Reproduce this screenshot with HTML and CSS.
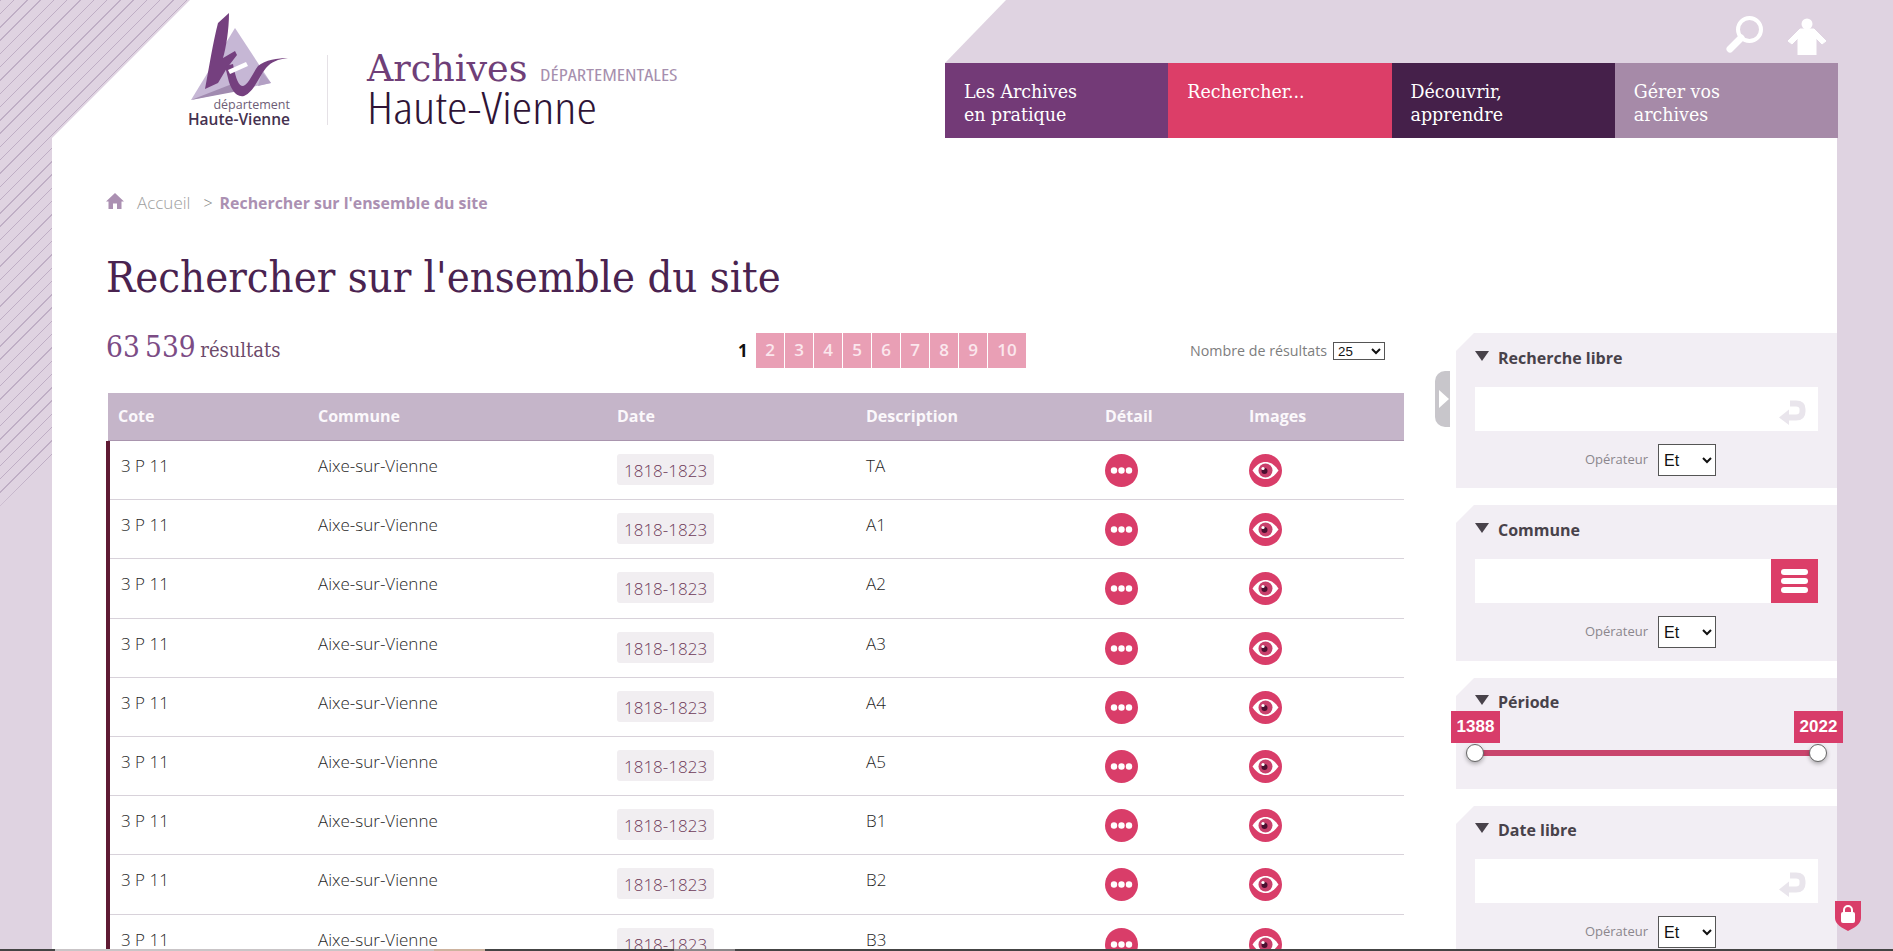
FILE: index.html
```html
<!DOCTYPE html>
<html lang="fr">
<head>
<meta charset="utf-8">
<title>Rechercher sur l'ensemble du site</title>
<link rel="stylesheet" href="styles.css">
</head>
<body>
<svg class="defs" width="0" height="0" aria-hidden="true">
  <symbol id="dots" viewBox="0 0 33 33"><circle cx="16.5" cy="16.5" r="16.5" fill="#d93d69"/><circle cx="9" cy="16.5" r="3.2" fill="#fff"/><circle cx="16.5" cy="16.5" r="3.2" fill="#fff"/><circle cx="24" cy="16.5" r="3.2" fill="#fff"/></symbol>
  <symbol id="eye" viewBox="0 0 33 33"><circle cx="16.5" cy="16.5" r="16.5" fill="#d93d69"/><path d="M3.500 16.5C8 10 12 8 16.5 8S25 10 29.500 16.5C25 23 21 25 16.5 25S8 23 3.500 16.5Z" fill="#fff"/><circle cx="16.5" cy="16.5" r="7" fill="#c9406c"/><circle cx="15.5" cy="17" r="3" fill="#4a1030"/><circle cx="14" cy="14.5" r="1.6" fill="#fff"/></symbol>
  <symbol id="enter" viewBox="0 0 27 25"><path d="M8 17.5H17Q23.500 17.500 23.500 11.500V9Q23.500 3.500 17 3.500H11" fill="none" stroke="#e9e5ec" stroke-width="6"/><path d="M0 17.5L10 9.5V25Z" fill="#e9e5ec"/></symbol>
</svg>
<div class="stripes"></div>
<div class="viewport">
  <div class="sheet">
    <header class="head">
      <a class="logo">
        <svg class="logo-mark" viewBox="16 10 104 90" width="104" height="90" aria-hidden="true">
          <path d="M65 28L21 100L101 83Z" fill="#c6b7d5"/>
          <path d="M21 100L62 84L74 90Z" fill="#a18bb0"/>
          <path d="M88 86L101 83L92 72Z" fill="#b3a0c4"/>
          <path d="M59 13C59 30 56 48 53 58L65 51L67 55L57 68L48 83L35 89C39 68 43 42 48 23Z" fill="#75407f"/>
          <path d="M55 66L63 64C65 74 67 84 72 86C78 86 82 74 88 66C95 60 108 58 118 58C108 59 101 62 96 68C88 78 84 92 74 96C66 98 60 88 58 78Z" fill="#75407f"/>
          <path d="M58 70L76 62L78 66L60 74Z" fill="#fff"/>
        </svg>
        <span class="logo-small">département</span>
        <span class="logo-big">Haute-Vienne</span>
      </a>
      <div class="brand">
        <div class="brand-top"><span class="brand-archives">Archives</span><span class="brand-dep">DÉPARTEMENTALES</span></div>
        <div class="brand-hv">Haute-Vienne</div>
      </div>
      <div class="head-right">
        <div class="tools">
          <svg class="tool-search" viewBox="0 0 38 38" width="38" height="38" aria-hidden="true"><circle cx="23.500" cy="14.500" r="11.500" fill="none" stroke="#fff" stroke-width="4"/><path d="M15 23L4 34" stroke="#fff" stroke-width="7" stroke-linecap="round"/></svg>
          <svg class="tool-user" viewBox="0 0 40 37" width="40" height="37" aria-hidden="true"><circle cx="20" cy="6" r="5.500" fill="#fff"/><path d="M11 37V20L5 26L1 23L13 11H27L39 23L35 26L29 20V37Z" fill="#fff" stroke="#fff" stroke-linejoin="round"/></svg>
        </div>
        <nav class="nav">
          <a class="nav-item nav-a">Les Archives<br>en pratique</a>
          <a class="nav-item nav-b">Rechercher...</a>
          <a class="nav-item nav-c">Découvrir,<br>apprendre</a>
          <a class="nav-item nav-d">Gérer vos<br>archives</a>
        </nav>
      </div>
    </header>

    <div class="crumbs">
      <svg class="home" viewBox="0 0 18 16" width="18" height="16" aria-hidden="true"><path d="M9 0L18 8.500H15.500V16H11V10.500H7V16H2.500V8.500H0Z" fill="#ab90b2"/></svg>
      <span class="crumb-link">Accueil</span>
      <span class="crumb-sep">&gt;</span>
      <strong class="crumb-now">Rechercher sur l'ensemble du site</strong>
    </div>

    <h1 class="title">Rechercher sur l'ensemble du site</h1>

    <div class="columns">
      <section class="results">
        <div class="bar">
          <div class="count"><span class="count-n">63&#8239;539</span> <span class="count-l">résultats</span></div>
          <div class="pager">
            <span class="page-cur">1</span>
            <a class="page">2</a><a class="page">3</a><a class="page">4</a><a class="page">5</a><a class="page">6</a><a class="page">7</a><a class="page">8</a><a class="page">9</a><a class="page page-wide">10</a>
          </div>
          <div class="perpage"><span>Nombre de résultats</span><select class="sel-small"><option>25</option></select></div>
        </div>

        <div class="thead">
          <div>Cote</div><div>Commune</div><div>Date</div><div>Description</div><div>Détail</div><div>Images</div>
        </div>
        <div class="tbody">
          <div class="row"><div>3 P 11</div><div>Aixe-sur-Vienne</div><div><span class="chip">1818-1823</span></div><div>TA</div><div><svg class="ico"><use href="#dots"/></svg></div><div><svg class="ico"><use href="#eye"/></svg></div></div>
          <div class="row"><div>3 P 11</div><div>Aixe-sur-Vienne</div><div><span class="chip">1818-1823</span></div><div>A1</div><div><svg class="ico"><use href="#dots"/></svg></div><div><svg class="ico"><use href="#eye"/></svg></div></div>
          <div class="row"><div>3 P 11</div><div>Aixe-sur-Vienne</div><div><span class="chip">1818-1823</span></div><div>A2</div><div><svg class="ico"><use href="#dots"/></svg></div><div><svg class="ico"><use href="#eye"/></svg></div></div>
          <div class="row"><div>3 P 11</div><div>Aixe-sur-Vienne</div><div><span class="chip">1818-1823</span></div><div>A3</div><div><svg class="ico"><use href="#dots"/></svg></div><div><svg class="ico"><use href="#eye"/></svg></div></div>
          <div class="row"><div>3 P 11</div><div>Aixe-sur-Vienne</div><div><span class="chip">1818-1823</span></div><div>A4</div><div><svg class="ico"><use href="#dots"/></svg></div><div><svg class="ico"><use href="#eye"/></svg></div></div>
          <div class="row"><div>3 P 11</div><div>Aixe-sur-Vienne</div><div><span class="chip">1818-1823</span></div><div>A5</div><div><svg class="ico"><use href="#dots"/></svg></div><div><svg class="ico"><use href="#eye"/></svg></div></div>
          <div class="row"><div>3 P 11</div><div>Aixe-sur-Vienne</div><div><span class="chip">1818-1823</span></div><div>B1</div><div><svg class="ico"><use href="#dots"/></svg></div><div><svg class="ico"><use href="#eye"/></svg></div></div>
          <div class="row"><div>3 P 11</div><div>Aixe-sur-Vienne</div><div><span class="chip">1818-1823</span></div><div>B2</div><div><svg class="ico"><use href="#dots"/></svg></div><div><svg class="ico"><use href="#eye"/></svg></div></div>
          <div class="row"><div>3 P 11</div><div>Aixe-sur-Vienne</div><div><span class="chip">1818-1823</span></div><div>B3</div><div><svg class="ico"><use href="#dots"/></svg></div><div><svg class="ico"><use href="#eye"/></svg></div></div>
        </div>
      </section>

      <aside class="side">
        <div class="toggle"><span class="toggle-arrow"></span></div>

        <div class="panel panel-std">
          <div class="panel-title"><span class="tri"></span>Recherche libre</div>
          <div class="field"><svg class="enter"><use href="#enter"/></svg></div>
          <div class="oper"><span>Opérateur</span><select class="sel"><option>Et</option></select></div>
        </div>

        <div class="panel panel-list">
          <div class="panel-title"><span class="tri"></span>Commune</div>
          <div class="field field-list">
            <span class="burger"><i></i><i></i><i></i></span>
          </div>
          <div class="oper"><span>Opérateur</span><select class="sel"><option>Et</option></select></div>
        </div>

        <div class="panel panel-range">
          <div class="panel-title"><span class="tri"></span>Période</div>
          <div class="slider">
            <span class="tag tag-l">1388</span>
            <span class="tag tag-r">2022</span>
            <span class="thumb thumb-l"></span>
            <span class="thumb thumb-r"></span>
          </div>
        </div>

        <div class="panel panel-std panel-last">
          <div class="panel-title"><span class="tri"></span>Date libre</div>
          <div class="field"><svg class="enter"><use href="#enter"/></svg></div>
          <div class="oper"><span>Opérateur</span><select class="sel"><option>Et</option></select></div>
        </div>
      </aside>
    </div>
  </div>
</div>
<div class="lock">
  <svg viewBox="0 0 26 30" width="26" height="30" aria-hidden="true"><path d="M0 0H26V17C26 23 19 27 13 30C7 27 0 23 0 17Z" fill="#d93d69"/><rect x="6" y="11" width="14" height="11" rx="2" fill="#fff"/><path d="M9 12V9A4 4 0 0 1 17 9V12" fill="none" stroke="#fff" stroke-width="2"/></svg>
</div>
<div class="taskbar"><span class="tb-a"></span><span class="tb-b"></span><span class="tb-c"></span><span class="tb-d"></span><span class="tb-e"></span><span class="tb-f"></span></div>
</body>
</html>
```

FILE: styles.css
```css
* { box-sizing: border-box; }
html, body { margin: 0; height: 951px; overflow: hidden; }
body {
  display: flex;
  flex-direction: column;
  background: #dfd3e1;
  font-family: "Open Sans", sans-serif;
  color: #444;
  position: relative;
}
.defs { position: absolute; }

.stripes {
  position: absolute;
  left: 0;
  top: 0;
  width: 190px;
  height: 506px;
  background: repeating-linear-gradient(135deg, #bfaec5 0, #bfaec5 1px, #dfd3e1 1px, #dfd3e1 9.4px);
  clip-path: polygon(0 0, 190px 0, 52px 138px, 52px 455px, 0 506px);
}
.viewport {
  flex: 1;
  min-height: 0;
  overflow: hidden;
  padding: 0 56px 0 52px;
  position: relative;
}
.sheet {
  position: relative;
  isolation: isolate;
  height: 100%;
}
.sheet::before {
  content: "";
  position: absolute;
  inset: 0;
  z-index: -1;
  background: #fff;
  clip-path: polygon(138px 0, 100% 0, 100% 100%, 0 100%, 0 138px);
}

/* header */
.head { display: flex; height: 138px; }
.logo {
  width: 104px;
  margin-left: 134px;
  padding-top: 10px;
  display: flex;
  flex-direction: column;
  align-items: flex-end;
  color: #4a3a52;
}
.logo-mark { display: block; flex: none; }
.logo-small { font-size: 12.5px; line-height: 14px; margin-top: -2px; font-weight: 400; color: #6e5d76; }
.logo-big { font-size: 15.500px; line-height: 15px; font-weight: 600; white-space: nowrap; color: #45314f; }
.brand {
  margin: 55px 0 0 37px;
  padding-left: 39px;
  border-left: 1px solid #e5e1e6;
  height: 70px;
  width: 618px;
  flex: none;
}
.brand-top { display: flex; align-items: baseline; height: 32px; margin-top: -2px; }
.brand-archives {
  font-family: "DejaVu Serif", serif;
  font-size: 36.500px;
  line-height: 32px;
  color: #6f3f78;
}
.brand-dep {
  margin-left: 13px;
  font-size: 17px;
  font-stretch: 75%;
  color: #a68fae;
  transform: scaleX(1.21);
  transform-origin: left center;
}
.brand-hv {
  font-size: 44px;
  line-height: 44px;
  font-weight: 300;
  font-stretch: 75%;
  color: #2f1436;
  white-space: nowrap;
  transform: scaleX(1.18);
  transform-origin: left center;
}
.head-right { width: 893px; margin-left: auto; flex: none; }
.tools {
  height: 63px;
  background: #dfd3e1;
  clip-path: polygon(61px 0, 100% 0, 100% 100%, 0 100%);
  display: flex;
  justify-content: flex-end;
  align-items: flex-start;
  padding: 15px 11px 0 0;
  gap: 23px;
}
.tool-user { margin-top: 3px; }
.nav { display: grid; grid-template-columns: repeat(4, 1fr); height: 75px; }
.nav-item {
  padding: 17px 0 0 19px;
  font-family: "DejaVu Serif", serif;
  font-stretch: condensed;
  font-size: 19.400px;
  line-height: 23px;
  color: #fff;
}
.nav-a { background: #733a77; }
.nav-b { background: #dc3e68; }
.nav-c { background: #45204a; }
.nav-d { background: #a68aa8; }

/* breadcrumb + title */
.crumbs {
  display: flex;
  align-items: center;
  height: 22px;
  margin: 54px 0 0 54px;
  font-size: 16px;
  color: #ab90b2;
}
.home { margin-right: 13px; position: relative; top: -2px; }
.crumb-link { font-size: 17px; font-weight: 300; color: #9e9e9e; position: relative; top: -1px; }
.crumb-sep { margin: 0 7px 0 13px; font-weight: 300; color: #888; }
.crumb-now { font-size: 15.900px; font-weight: 700; }
.title {
  margin: 32px 0 0 54px;
  height: 62px;
  font-family: "DejaVu Serif", serif;
  font-stretch: condensed;
  font-size: 43.250px;
  line-height: 62px;
  font-weight: 400;
  color: #4a2350;
  white-space: nowrap;
}

/* columns */
.columns {
  display: grid;
  grid-template-columns: 1298px 381px;
  column-gap: 52px;
  margin: 25px 0 0 54px;
}
.results { min-width: 0; }
.bar {
  display: grid;
  grid-template-columns: 632px auto 1fr;
  grid-template-rows: 35px;
  align-items: center;
  height: 35px;
  margin-bottom: 25px;
}
.count { font-family: "DejaVu Serif", serif; font-stretch: condensed; white-space: nowrap; margin-top: -8px; }
.count-n { font-size: 29.500px; color: #7c4c85; }
.count-l { font-size: 20px; color: #6d4a6a; }
.pager { display: flex; align-items: center; }
.page-cur { font-size: 17px; font-weight: 700; color: #111; width: 18px; }
.page {
  width: 28px;
  height: 35px;
  margin-right: 1px;
  background: #e99fb5;
  color: #fbe7ed;
  font-size: 17px;
  font-weight: 600;
  line-height: 34px;
  text-align: center;
}
.page-wide { width: 38px; margin-right: 0; }
.perpage {
  display: flex;
  justify-content: flex-end;
  align-items: center;
  gap: 6px;
  padding-right: 19px;
  font-size: 14.250px;
  font-weight: 400;
  color: #7d7d7d;
}
.sel-small {
  width: 52px;
  height: 18px;
  padding: 0;
  border: 1px solid #555;
  border-radius: 0;
  background: #fff;
  font-family: "Liberation Sans", sans-serif;
  font-size: 13.300px;
  color: #111;
}

/* table */
.thead, .row { display: grid; }
.thead {
  grid-template-columns: 210px 299px 249px 239px 144px 155px;
  margin-left: 2px;
  height: 48px;
  background: #c5b5c9;
  border-bottom: 1px solid #a995ae;
  font-size: 16px;
  font-weight: 700;
  line-height: 47px;
  color: #fbf8fb;
}
.thead > div:first-child { padding-left: 10px; }
.tbody { border-left: 4px solid #5f1a33; }
.row {
  grid-template-columns: 208px 299px 249px 239px 144px 155px;
  height: 59.200px;
  border-bottom: 1px solid #d8d2da;
  padding-top: 14px;
  font-size: 17px;
  font-weight: 300;
  line-height: 22px;
  color: #1f1f1f;
}
.row > div:first-child { padding-left: 11px; }
.chip {
  display: inline-block;
  height: 31px;
  margin-top: -1px;
  padding: 0 7px;
  background: #f1eef1;
  border-radius: 3px;
  font-size: 17px;
  line-height: 33px;
  font-weight: 300;
  color: #6e3a59;
}
.ico { display: block; width: 33px; height: 33px; margin-top: -1px; }

/* sidebar */
.side {
  position: relative;
  display: flex;
  flex-direction: column;
  gap: 17px;
}
.toggle {
  position: absolute;
  left: -21px;
  top: 38px;
  width: 15px;
  height: 56px;
  background: #c8c6cb;
  border-radius: 10px 0 0 10px;
  display: flex;
  align-items: center;
  padding-left: 4px;
}
.toggle-arrow {
  width: 0;
  height: 0;
  border-left: 10px solid #fff;
  border-top: 9px solid transparent;
  border-bottom: 9px solid transparent;
}
.panel {
  flex: none;
  background: #f2eef4;
  padding: 14px 19px 0;
  clip-path: polygon(18px 0, 100% 0, 100% 100%, 0 100%, 0 18px);
}
.panel-std { height: 155px; }
.panel-list { height: 156px; }
.panel-last { padding-top: 13px; }
.panel-range { height: 111px; padding-top: 13px; clip-path: none; position: relative; }
.panel-range::before {
  content: "";
  position: absolute;
  left: 0;
  top: 0;
  border-top: 18px solid #fff;
  border-right: 18px solid transparent;
}
.panel-title {
  position: relative;
  display: flex;
  align-items: center;
  height: 22px;
  font-size: 16px;
  font-weight: 700;
  color: #48424a;
}
.tri {
  width: 0;
  height: 0;
  margin: 0 9px 0 0;
  border-top: 10px solid #48424a;
  border-left: 7.500px solid transparent;
  border-right: 7.500px solid transparent;
  position: relative;
  top: -2px;
}
.field {
  position: relative;
  height: 44px;
  margin-top: 18px;
  background: #fff;
}
.enter { position: absolute; right: 12px; top: 13px; width: 27px; height: 25px; }
.field-list { display: flex; justify-content: flex-end; }
.burger {
  width: 47px;
  height: 44px;
  background: #dc3e68;
  display: flex;
  flex-direction: column;
  align-items: center;
  justify-content: center;
  gap: 3px;
}
.burger i { display: block; width: 27px; height: 6px; border-radius: 3px; background: #fff; }
.oper {
  display: flex;
  justify-content: center;
  align-items: center;
  gap: 10px;
  margin-top: 13px;
  padding-left: 8px;
  font-size: 13px;
  font-weight: 400;
  color: #8b868d;
}
.oper > span { position: relative; top: -1px; }
.sel {
  width: 58px;
  height: 32px;
  padding: 0 0 0 1px;
  border: 1px solid #555;
  border-radius: 0;
  background: #fff;
  font-family: "Liberation Sans", sans-serif;
  font-size: 16px;
  color: #111;
}

/* range */
.slider {
  position: relative;
  height: 6px;
  margin-top: 37px;
  background: #c9456d;
}
.tag {
  position: absolute;
  top: -39px;
  width: 49px;
  height: 32px;
  background: #d83c6a;
  color: #fff;
  font-family: "Liberation Sans", sans-serif;
  font-size: 17px;
  font-weight: 700;
  line-height: 32px;
  text-align: center;
}
.tag-l { left: -24px; }
.tag-r { right: -25px; }
.thumb {
  position: absolute;
  top: -6px;
  width: 18px;
  height: 18px;
  border: 1px solid #666;
  border-radius: 50%;
  background: #fff;
  box-shadow: 0 2px 4px rgba(0, 0, 0, .3);
}
.thumb-l { left: -9px; }
.thumb-r { right: -9px; }

/* lock */
.lock { position: absolute; left: 1835px; top: 901px; width: 26px; height: 30px; }

/* bottom strip */
.taskbar { flex: none; height: 2px; display: flex; background: #444; }
.tb-a { width: 55px; background: #444; }
.tb-b { width: 379px; background: #c9c5c7; }
.tb-c { width: 51px; background: #cdb39f; }
.tb-d { width: 189px; background: #444; }
.tb-e { width: 61px; background: #8a8789; }
.tb-f { flex: 1; background: #444; }
```
